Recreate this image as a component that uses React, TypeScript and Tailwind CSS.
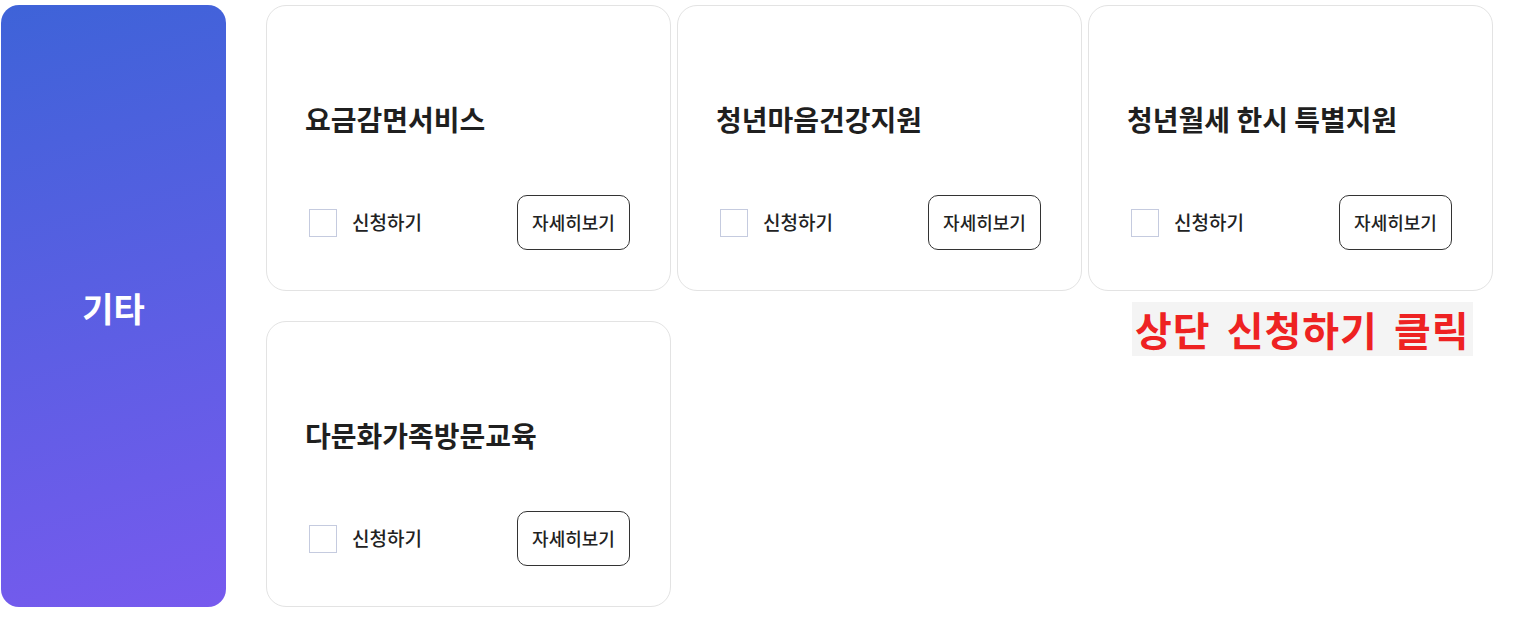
const items = ["요금감면서비스", "청년마음건강지원", "청년월세 한시 특별지원", "다문화가족방문교육"];

const ServiceCard = ({ title }: { title: string }) => {
  return (
    <div className="h-[286px] rounded-[20px] border border-[#e3e3e3] bg-white pl-[38px] pr-[40px] pt-[95px] flex flex-col">
      <h3 className="text-[28px] leading-[36px] font-bold text-[#1f1f1f]">{title}</h3>
      <div className="mt-[58px] flex items-center justify-between">
        <label className="flex items-center ml-[4px] cursor-pointer">
          <span className="w-[28px] h-[28px] border border-[#c5cbdf] bg-white" />
          <span className="ml-[15px] text-[19px] text-[#222] font-medium">신청하기</span>
        </label>
        <button className="w-[113px] h-[55px] rounded-[10px] border border-[#333] text-[18px] text-[#222] font-medium bg-white">
          자세히보기
        </button>
      </div>
    </div>
  );
};

export default function App() {
  return (
    <div
      className="w-[1517px] h-[630px] bg-white flex items-start pt-[5px] pl-[1px]"
      style={{ fontFamily: '"Noto Sans CJK KR", "Noto Sans", sans-serif' }}
    >
      {/* category panel */}
      <div className="w-[225px] h-[602px] rounded-[18px] bg-[linear-gradient(165deg,#3e63d8,#775aee)] flex items-center justify-center">
        <span className="mt-[2px] text-white text-[34px] font-bold">기타</span>
      </div>

      {/* cards */}
      <div className="relative ml-[40px] grid grid-cols-[405px_405px_405px] gap-x-[6px] gap-y-[30px]">
        {items.map((t) => (
          <ServiceCard key={t} title={t} />
        ))}
        <div className="absolute left-[866px] top-[297px] bg-[#f4f4f4] pl-[3px] pr-[3px] h-[54px] flex items-center">
          <span className="text-[#ee2222] text-[40px] font-bold leading-none tracking-[1px] [word-spacing:6px]">상단 신청하기 클릭</span>
        </div>
      </div>
    </div>
  );
}
